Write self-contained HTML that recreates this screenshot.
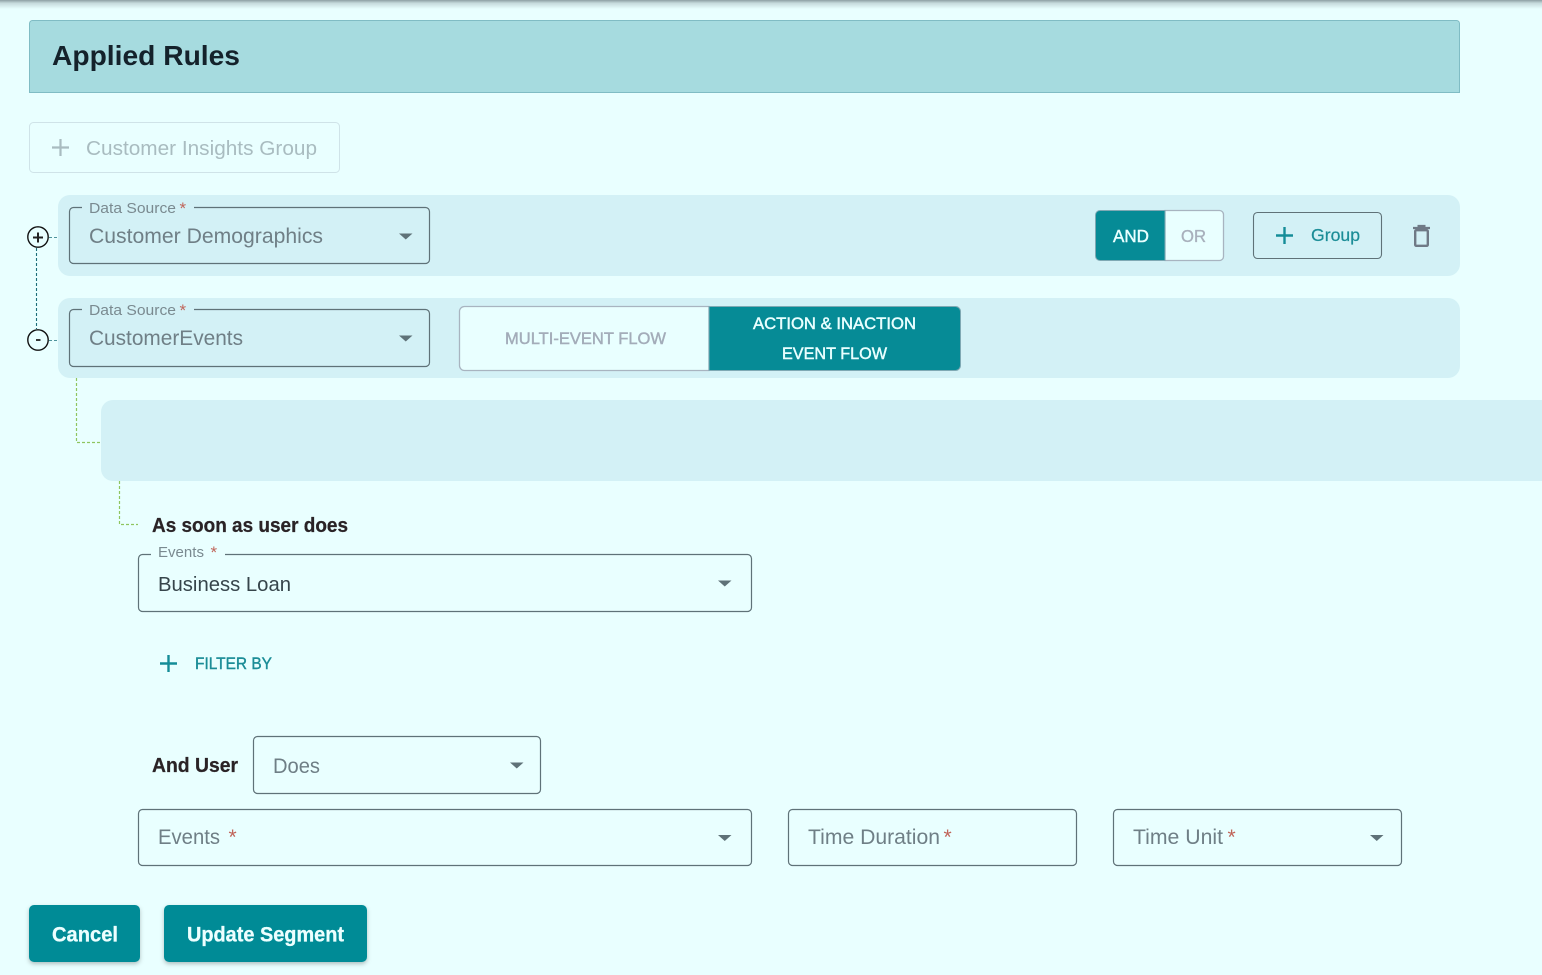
<!DOCTYPE html>
<html lang="en">
<head>
<meta charset="utf-8">
<title>Applied Rules</title>
<style>
html,body{margin:0;padding:0;width:1542px;height:975px;overflow:hidden;background:#e9ffff}
svg{display:block;position:absolute;left:0;top:0}
text{font-family:"Liberation Sans",sans-serif;white-space:pre}
.b{font-weight:700}
.sel{fill:none;stroke:#5f7278;stroke-width:1.2}
.arr{fill:#5f7278}
.star{fill:#c0655a}
.lab{fill:#7a8a90;font-size:15px}
.ph{fill:#6f7f86;font-size:21px}
</style>
</head>
<body>
<svg width="1542" height="975" viewBox="0 0 1542 975" xmlns="http://www.w3.org/2000/svg">
<defs>
<linearGradient id="top" x1="0" y1="0" x2="0" y2="1">
<stop offset="0" stop-color="#8d9fa3"/>
<stop offset="0.35" stop-color="#c6dadc"/>
<stop offset="1" stop-color="#e9ffff"/>
</linearGradient>
<filter id="sh" x="-10%" y="-10%" width="120%" height="130%">
<feDropShadow dx="0" dy="2" stdDeviation="2" flood-color="#000" flood-opacity="0.25"/>
</filter>
</defs>
<rect width="1542" height="975" fill="#e9ffff"/>
<rect width="1542" height="9" fill="url(#top)"/>

<!-- header -->
<path d="M29.5 93V23.500a3 3 0 0 1 3-3H1456.500a3 3 0 0 1 3 3V92.500H29.500Z" fill="#a6dbdf" stroke="#80bcc4"/>
<text x="52" y="65" font-size="28" font-weight="700" fill="#14222b" textLength="188" lengthAdjust="spacingAndGlyphs">Applied Rules</text>

<!-- customer insights -->
<rect x="29.500" y="122.500" width="310" height="50" rx="4" fill="none" stroke="#cfe3e8"/>
<path d="M52 147.500H69M60.500 139V156" stroke="#a9bcc0" stroke-width="2.200" fill="none"/>
<text x="86" y="155" font-size="20.500" fill="#a9bcc0" textLength="231" lengthAdjust="spacingAndGlyphs">Customer Insights Group</text>

<!-- panels -->
<rect x="58" y="195" width="1402" height="81" rx="12" fill="#d3f1f6"/>
<rect x="58" y="298" width="1402" height="80" rx="12" fill="#d3f1f6"/>
<path d="M1542 400H113a12 12 0 0 0-12 12V469a12 12 0 0 0 12 12H1542Z" fill="#d3f1f6"/>

<!-- connectors -->
<path d="M36.500 248V329" stroke="#1c6c78" stroke-width="1.100" stroke-dasharray="3 2" fill="none"/>
<path d="M49 237.500H58M49 340.500H58" stroke="#4f939c" stroke-width="1.100" stroke-dasharray="3 2" fill="none"/>
<circle cx="38" cy="237" r="10.200" fill="#e9ffff" stroke="#111" stroke-width="1.400"/>
<path d="M33 237.500H43M38 232.500V242.500" stroke="#222" stroke-width="2" fill="none"/>
<circle cx="38" cy="340" r="10.200" fill="#e9ffff" stroke="#111" stroke-width="1.400"/>
<path d="M36 340H40.500" stroke="#222" stroke-width="1.800" fill="none"/>
<path d="M76.500 378V442.500H101" stroke="#8fc560" stroke-width="1.200" stroke-dasharray="3 2" fill="none"/>
<path d="M119.500 481V524.500H138" stroke="#8fc560" stroke-width="1.200" stroke-dasharray="3 2" fill="none"/>

<!-- select 1 -->
<path class="sel" d="M82 207.500H73.500a4 4 0 0 0-4 4V259.500a4 4 0 0 0 4 4H425.500a4 4 0 0 0 4-4V211.500a4 4 0 0 0-4-4H194"/>
<text class="lab" x="89" y="213" textLength="87" lengthAdjust="spacingAndGlyphs">Data Source</text>
<text class="star" x="179.500" y="214" font-size="17">*</text>
<text class="ph" x="89" y="243" textLength="234" lengthAdjust="spacingAndGlyphs">Customer Demographics</text>
<path class="arr" d="M399 233.500H412.500L405.750 239.500Z"/>

<!-- and/or -->
<path d="M1165 210.500H1219.500a4 4 0 0 1 4 4V256.500a4 4 0 0 1-4 4H1165Z" fill="#e9ffff" stroke="#a8b4c0" stroke-width="1.300"/>
<path d="M1165 210.500H1100a4.500 4.500 0 0 0-4.500 4.500V256a4.500 4.500 0 0 0 4.500 4.500H1165Z" fill="#068b96" stroke="#7fa9b4"/>
<text x="1113" y="242" font-size="17.500" fill="#e9ffff" stroke="#e9ffff" stroke-width="0.450" textLength="36" lengthAdjust="spacingAndGlyphs">AND</text>
<text x="1181" y="242" font-size="17.500" fill="#a8b0bc" stroke="#a8b0bc" stroke-width="0.350" textLength="25" lengthAdjust="spacingAndGlyphs">OR</text>

<!-- group -->
<rect x="1253.500" y="212.500" width="128" height="46" rx="4" fill="none" stroke="#5f7278" stroke-width="1.100"/>
<path d="M1276 235.500H1293M1284.500 227V244" stroke="#148d98" stroke-width="2.400" fill="none"/>
<text x="1311" y="241" font-size="17.500" fill="#1b8d97" stroke="#1b8d97" stroke-width="0.200" textLength="49" lengthAdjust="spacingAndGlyphs">Group</text>

<!-- trash -->
<path d="M1413 228H1430M1417.500 226H1425.500" stroke="#6f7a86" stroke-width="2.200" fill="none"/>
<rect x="1415.200" y="230.200" width="12.600" height="15.600" rx="1" fill="none" stroke="#6f7a86" stroke-width="2.400"/>

<!-- select 2 -->
<path class="sel" d="M82 309.500H73.500a4 4 0 0 0-4 4V362.500a4 4 0 0 0 4 4H425.500a4 4 0 0 0 4-4V313.500a4 4 0 0 0-4-4H194"/>
<text class="lab" x="89" y="315" textLength="87" lengthAdjust="spacingAndGlyphs">Data Source</text>
<text class="star" x="179.500" y="316" font-size="17">*</text>
<text class="ph" x="89" y="345" textLength="154" lengthAdjust="spacingAndGlyphs">CustomerEvents</text>
<path class="arr" d="M399 335.500H412.500L405.750 341.500Z"/>

<!-- flow toggle -->
<path d="M709 306.500H464.500a5 5 0 0 0-5 5V365.500a5 5 0 0 0 5 5H709Z" fill="#e9ffff" stroke="#a8b4c0" stroke-width="1.300"/>
<path d="M709 306.500H955.500a5 5 0 0 1 5 5V365.500a5 5 0 0 1-5 5H709Z" fill="#068b96" stroke="#7fa9b4"/>
<text x="505" y="344" font-size="17" fill="#a3acb9" stroke="#a3acb9" stroke-width="0.450" textLength="161" lengthAdjust="spacingAndGlyphs">MULTI-EVENT FLOW</text>
<text x="753" y="329" font-size="17" fill="#e9ffff" stroke="#e9ffff" stroke-width="0.450" textLength="163" lengthAdjust="spacingAndGlyphs">ACTION &amp; INACTION</text>
<text x="782" y="359" font-size="17" fill="#e9ffff" stroke="#e9ffff" stroke-width="0.450" textLength="105" lengthAdjust="spacingAndGlyphs">EVENT FLOW</text>

<!-- as soon -->
<text class="b" x="152" y="532" font-size="20.500" fill="#2a2326" stroke="#2a2326" stroke-width="0.250" textLength="196" lengthAdjust="spacingAndGlyphs">As soon as user does</text>
<path class="sel" d="M151 554.500H142.500a4 4 0 0 0-4 4V607.500a4 4 0 0 0 4 4H747.500a4 4 0 0 0 4-4V558.500a4 4 0 0 0-4-4H225"/>
<text class="lab" x="158" y="557" textLength="46" lengthAdjust="spacingAndGlyphs">Events</text>
<text class="star" x="210.500" y="558" font-size="17">*</text>
<text x="158" y="591" font-size="20.500" fill="#36454b" textLength="133" lengthAdjust="spacingAndGlyphs">Business Loan</text>
<path class="arr" d="M718 580.500H731.500L724.750 586.500Z"/>

<!-- filter by -->
<path d="M160 663.500H177M168.500 655V672" stroke="#148d98" stroke-width="2.400" fill="none"/>
<text x="195" y="669" font-size="16.500" fill="#1b8d97" stroke="#1b8d97" stroke-width="0.400" textLength="77" lengthAdjust="spacingAndGlyphs">FILTER BY</text>

<!-- and user -->
<text class="b" x="152" y="772" font-size="20.500" fill="#2a2326" stroke="#2a2326" stroke-width="0.250" textLength="86" lengthAdjust="spacingAndGlyphs">And User</text>
<rect class="sel" x="253.500" y="736.500" width="287" height="57" rx="4"/>
<text class="ph" x="273" y="773" textLength="47" lengthAdjust="spacingAndGlyphs">Does</text>
<path class="arr" d="M510 762.500H523.500L516.750 768.500Z"/>

<!-- row -->
<rect class="sel" x="138.500" y="809.500" width="613" height="56" rx="4"/>
<text class="ph" x="158" y="844" textLength="62" lengthAdjust="spacingAndGlyphs">Events</text>
<text class="star" x="228.500" y="844" font-size="21">*</text>
<path class="arr" d="M718 835H731.500L724.750 841Z"/>

<rect class="sel" x="788.500" y="809.500" width="288" height="56" rx="4"/>
<text class="ph" x="808" y="844" textLength="132" lengthAdjust="spacingAndGlyphs">Time Duration</text>
<text class="star" x="943.500" y="844" font-size="21">*</text>

<rect class="sel" x="1113.500" y="809.500" width="288" height="56" rx="4"/>
<text class="ph" x="1133" y="844" textLength="90" lengthAdjust="spacingAndGlyphs">Time Unit</text>
<text class="star" x="1227.500" y="844" font-size="21">*</text>
<path class="arr" d="M1370 835H1383.500L1376.750 841Z"/>

<!-- buttons -->
<rect x="29" y="905" width="111" height="57" rx="5" fill="#068b96" filter="url(#sh)"/>
<text class="b" x="52" y="941.500" font-size="21.500" fill="#ecffff" stroke="#ecffff" stroke-width="0.300" textLength="66" lengthAdjust="spacingAndGlyphs">Cancel</text>
<rect x="164" y="905" width="203" height="57" rx="5" fill="#068b96" filter="url(#sh)"/>
<text class="b" x="187" y="941.500" font-size="21.500" fill="#ecffff" stroke="#ecffff" stroke-width="0.300" textLength="157" lengthAdjust="spacingAndGlyphs">Update Segment</text>
</svg>
</body>
</html>
